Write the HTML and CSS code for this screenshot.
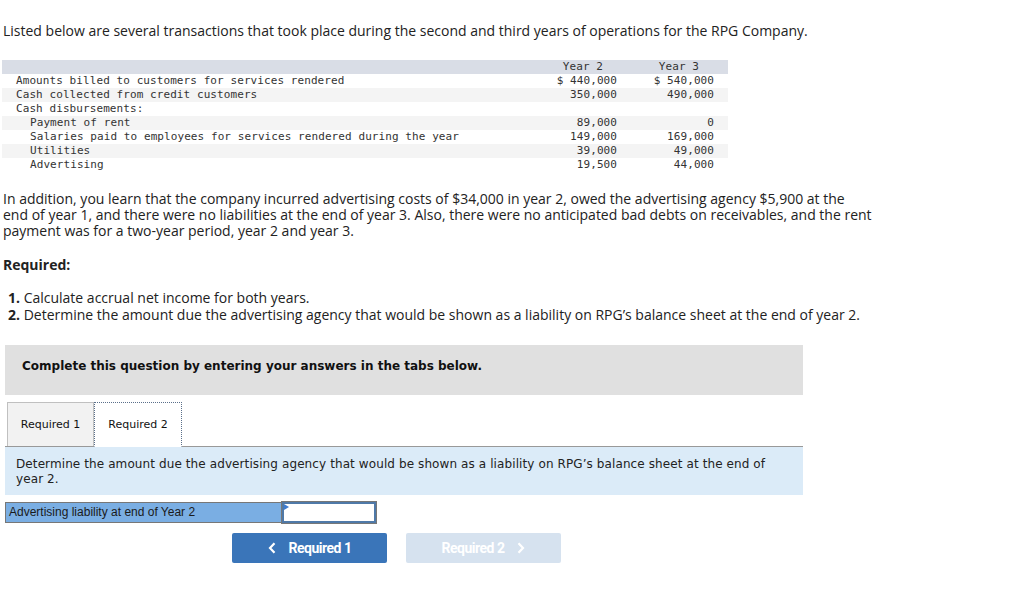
FILE: index.html
```html
<!DOCTYPE html>
<html>
<head>
<meta charset="utf-8">
<link rel="stylesheet" href="styles.css">
</head>
<body>
<div class="page">
  <p class="intro">Listed below are several transactions that took place during the second and third years of operations for the RPG Company.</p>

  <table class="data">
    <thead>
      <tr><th class="lbl"></th><th class="y2">Year 2</th><th class="y3">Year 3</th></tr>
    </thead>
    <tbody>
      <tr><td class="lbl">Amounts billed to customers for services rendered</td><td class="y2">$ 440,000</td><td class="y3">$ 540,000</td></tr>
      <tr class="alt"><td class="lbl">Cash collected from credit customers</td><td class="y2">350,000</td><td class="y3">490,000</td></tr>
      <tr><td class="lbl">Cash disbursements:</td><td class="y2"></td><td class="y3"></td></tr>
      <tr class="alt"><td class="lbl ind">Payment of rent</td><td class="y2">89,000</td><td class="y3">0</td></tr>
      <tr><td class="lbl ind">Salaries paid to employees for services rendered during the year</td><td class="y2">149,000</td><td class="y3">169,000</td></tr>
      <tr class="alt"><td class="lbl ind">Utilities</td><td class="y2">39,000</td><td class="y3">49,000</td></tr>
      <tr><td class="lbl ind">Advertising</td><td class="y2">19,500</td><td class="y3">44,000</td></tr>
    </tbody>
  </table>

  <p class="para">In addition, you learn that the company incurred advertising costs of $34,000 in year 2, owed the advertising agency $5,900 at the<br>end of year 1, and there were no liabilities at the end of year 3. Also, there were no anticipated bad debts on receivables, and the rent payment was for a two-year period, year 2 and year 3.</p>

  <p class="req-title">Required:</p>

  <ol class="req-list">
    <li><b>1.</b> Calculate accrual net income for both years.</li>
    <li><b>2.</b> Determine the amount due the advertising agency that would be shown as a liability on RPG’s balance sheet at the end of year 2.</li>
  </ol>

  <div class="panel">
    <div class="banner">Complete this question by entering your answers in the tabs below.</div>

    <div class="tabs">
      <div class="tab">Required 1</div>
      <div class="tab active">Required 2</div>
    </div>

    <div class="info">Determine the amount due the advertising agency that would be shown as a liability on RPG’s balance sheet at the end of year 2.</div>

    <div class="answer">
      <div class="ans-label">Advertising liability at end of Year 2</div>
      <div class="ans-input"><span class="flag"></span></div>
    </div>

    <div class="nav">
      <div class="btn prev">
        <svg class="chev" width="8" height="12" viewBox="0 0 8 12"><path d="M6.5 1.2 L2 6 L6.5 10.8" fill="none" stroke="#fff" stroke-width="2.2"/></svg>
        <span>Required 1</span>
      </div>
      <div class="btn next">
        <span>Required 2</span>
        <svg class="chev" width="8" height="12" viewBox="0 0 8 12"><path d="M1.5 1.2 L6 6 L1.5 10.8" fill="none" stroke="#fff" stroke-width="2.2"/></svg>
      </div>
    </div>
  </div>
</div>
</body>
</html>
```

FILE: styles.css
```css
html, body {
  margin: 0;
  padding: 0;
  background: #fff;
}

.page {
  padding: 0 0 0 3px;
  font-family: "Open Sans", "Liberation Sans", sans-serif;
  color: #222;
}

.intro {
  margin: 22px 0 0 0;
  font-size: 14px;
  line-height: 18px;
}

.data {
  margin-top: 20px;
  margin-left: -1px;
  border-collapse: collapse;
  table-layout: fixed;
  width: 726px;
  font-family: "DejaVu Sans Mono", "Liberation Mono", monospace;
  font-size: 11px;
  letter-spacing: 0.08px;
  color: #333;
}

.data th, .data td {
  box-sizing: border-box;
  height: 14px;
  line-height: 14px;
  padding: 0;
  font-weight: normal;
  white-space: nowrap;
}

.data thead tr {
  background: #d9dde6;
}

.data .alt {
  background: #f4f4f4;
}

.data .lbl {
  text-align: left;
  padding-left: 14px;
}

.data .lbl.ind {
  padding-left: 28px;
}

.data .y2 {
  width: 80px;
  text-align: right;
  padding-right: 8px;
}

.data .y3 {
  width: 103px;
  text-align: right;
  padding-right: 14px;
}

.data th.y2 {
  padding-right: 22px;
}

.data th.y3 {
  padding-right: 29px;
}

.para {
  margin: 19px 0 0 0;
  font-size: 14px;
  line-height: 16px;
  width: 880px;
}

.req-title {
  margin: 18px 0 0 0;
  font-size: 14px;
  font-weight: bold;
  line-height: 16px;
}

.req-list {
  list-style: none;
  margin: 16px 0 0 0;
  padding: 0 0 0 5px;
  font-size: 14px;
  line-height: 17px;
}

.req-list b {
  font-weight: bold;
}

.panel {
  margin-top: 22px;
  margin-left: 2px;
  width: 798px;
  font-family: "DejaVu Sans", Verdana, sans-serif;
}

.banner {
  background: #e0e0e0;
  height: 50px;
  box-sizing: border-box;
  padding: 13px 0 0 17px;
  font-size: 12px;
  line-height: 16px;
  font-weight: bold;
  color: #111;
}

.tabs {
  display: flex;
  margin-top: 7px;
  padding-left: 2px;
  border-bottom: 1px solid #999;
  height: 44px;
}

.tab {
  width: 85px;
  height: 43px;
  border: 1px solid #c0c0c0;
  border-bottom: none;
  background: #f2f2f2;
  display: flex;
  align-items: center;
  justify-content: center;
  font-size: 11px;
  color: #111;
}

.tab.active {
  background: #fff;
  border: 1px dotted #5a6f8a;
  border-bottom: 1px solid #fff;
  height: 43px;
  margin-bottom: -1px;
  width: 86px;
}

.info {
  background: #dbebf8;
  padding: 10px 30px 8px 11px;
  font-size: 12px;
  line-height: 15px;
  letter-spacing: 0.1px;
  color: #222;
  height: 30px;
}

.answer {
  display: flex;
  margin-top: 7px;
  width: 371px;
  height: 21px;
}

.ans-label {
  flex: 1;
  background: #7aaee3;
  border: 1px solid #777;
  border-right: none;
  font-family: "Liberation Sans", Arial, sans-serif;
  font-size: 12px;
  line-height: 19px;
  padding-left: 3px;
  color: #1a1a1a;
}

.ans-input {
  position: relative;
  width: 90px;
  background: #fff;
  border: 2px solid #4f79a8;
  box-shadow: 0 0 0 1px #777;
}

.flag {
  position: absolute;
  left: 0;
  top: 0;
  width: 0;
  height: 0;
  border-top: 3px solid transparent;
  border-bottom: 3px solid transparent;
  border-left: 5px solid #3d7bd0;
}

.nav {
  display: flex;
  gap: 19px;
  margin-top: 10px;
  margin-left: 227px;
}

.btn {
  width: 155px;
  height: 30px;
  border-radius: 2px;
  display: flex;
  align-items: center;
  justify-content: center;
  gap: 13px;
  font-family: "Roboto", "Liberation Sans", sans-serif;
  font-size: 14px;
  font-weight: bold;
  letter-spacing: -0.5px;
  color: #fff;
}

.btn.prev {
  background: #3a75b9;
}

.btn.next {
  background: #d6e2ef;
}

.chev {
  display: block;
}
```
